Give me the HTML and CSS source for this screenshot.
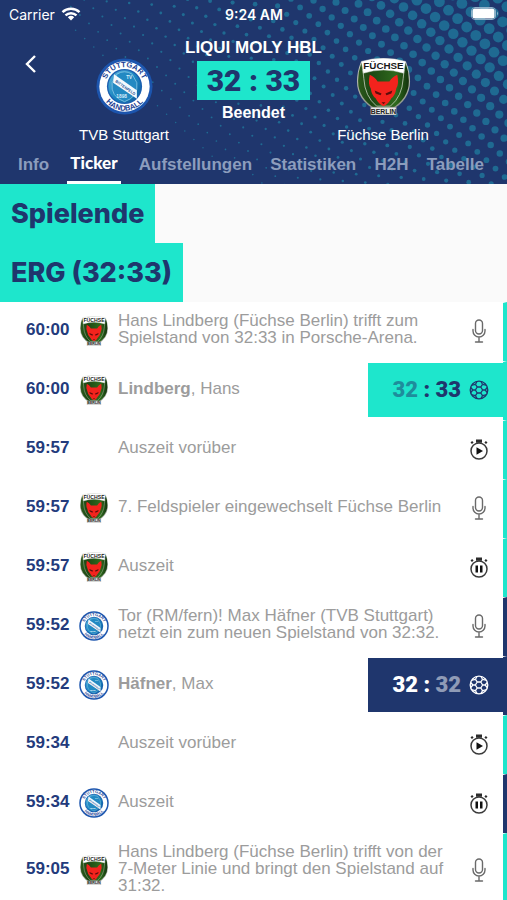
FILE: index.html
```html
<!DOCTYPE html>
<html lang="de">
<head>
<meta charset="utf-8">
<meta name="viewport" content="width=device-width, initial-scale=1">
<title>TVB Stuttgart – Füchse Berlin</title>
<link rel="stylesheet" href="styles.css">
</head>
<body>
<svg class="defs" aria-hidden="true">
  <defs>
    <linearGradient id="g-blue" x1="0" y1="0" x2="1" y2="1"><stop offset="0" stop-color="#59b4dc"/><stop offset=".5" stop-color="#1b86c0"/><stop offset="1" stop-color="#0d5c9c"/></linearGradient>
    <linearGradient id="g-green" x1="0" y1="0" x2="1" y2="0"><stop offset="0" stop-color="#2c5a1c"/><stop offset=".25" stop-color="#1d4713"/><stop offset=".75" stop-color="#2f6a1d"/><stop offset="1" stop-color="#12330c"/></linearGradient>
    <linearGradient id="g-silver" x1="0" y1="0" x2="0" y2="1"><stop offset="0" stop-color="#c9ccc6"/><stop offset="1" stop-color="#8d9488"/></linearGradient>
    <path id="arc-top" d="M9.500 30a20.500 20.500 0 0 1 41 0"/>
    <path id="arc-bottom" d="M4.500 30a25.500 25.500 0 0 0 51 0"/>
    <symbol id="tvb" viewBox="0 0 60 60">
      <circle cx="30" cy="30" r="29.500" fill="#1c55ae"/>
      <circle cx="30" cy="30" r="26.500" fill="#fff"/>
      <circle cx="30" cy="30" r="18.500" fill="#1c5fb0"/>
      <circle cx="30" cy="30" r="17" fill="url(#g-blue)"/>
      <path d="M22 17q8-5 16 0l5 9q2 15-13 20-15-5-13-20z" fill="#2389c2" stroke="#8fcbe8" stroke-width=".8"/>
      <path d="M19 17l24 17v9L18 26z" fill="#f4f9fd"/>
      <text class="crest-strip" x="31" y="32.500" transform="rotate(35 31 31)">BITTENFELD</text>
      <text class="crest-small" x="35" y="22">TV</text>
      <text class="crest-small" x="27" y="42">1898</text>
      <text class="crest-ring"><textPath href="#arc-top" startOffset="50%">STUTTGART</textPath></text>
      <text class="crest-ring"><textPath href="#arc-bottom" startOffset="50%">HANDBALL</textPath></text>
    </symbol>
    <symbol id="fuchs" viewBox="0 0 54 58">
      <path d="M4 4Q27-3 50 4q4 10 4 20 0 19-19 29H19Q0 43 0 24 0 14 4 4z" fill="url(#g-silver)"/>
      <path d="M4.500 5Q27-2 49.500 5 53 14 52.800 24q0 17-18 28h-15.600Q1.200 41 1.200 24 1 14 4.500 5z" fill="url(#g-green)"/>
      <path d="M6 12l1 9q1 18 13 28h14q12-10 13-28l1-9" fill="none" stroke="#c9d3c2" stroke-width=".8"/>
      <path d="M4.500 3.500Q27-3 49.500 3.500l-2 12Q27 9 6.500 15.500z" fill="#fff" stroke="#d5d8d2" stroke-width=".5"/>
      <path d="M13 17q5 2 8 7h12q3-5 8-7 2 9-1 14-1 7-5 10-3 6-8 8-5-2-8-8-4-3-5-10-3-5-1-14z" fill="#f3231d"/>
      <path d="M18 33l7 3-1 2-5-2zM36 33l-7 3 1 2 5-2zM25 45h4l-2 2z" fill="#5c0d0b"/>
      <path d="M14 50h26v8H14z" fill="#e9ebe8" stroke="#777" stroke-width=".6"/>
      <text class="crest-name" x="27" y="11.500">FÜCHSE</text>
      <text class="crest-city" x="27" y="56.600">BERLIN</text>
    </symbol>
    <symbol id="mic" viewBox="0 0 24 24">
      <g fill="none" stroke="#6a6a6a" stroke-width="1.400" stroke-linecap="round">
        <rect x="8.500" y="1" width="7" height="14" rx="3.500"/>
        <path d="M6 10.500v1.500a6 6 0 0 0 12 0v-1.500M12 18v5M8.500 23h7"/>
      </g>
    </symbol>
    <symbol id="watch" viewBox="0 0 24 24">
      <circle cx="12" cy="14" r="8" fill="none" stroke="#3a3a3a" stroke-width="1.500"/>
      <path d="M9 2.500h6v3.300H9zM3.500 5.500l1.600-1.600 1.500 1.500L5 7zM20.500 5.500l-1.600-1.600-1.500 1.500L19 7z" fill="#2b2b2b"/>
    </symbol>
    <symbol id="resume" viewBox="0 0 24 24"><use href="#watch"/><path d="M9.500 10.300l6.500 3.700-6.500 3.700z" fill="#111"/></symbol>
    <symbol id="pause" viewBox="0 0 24 24"><use href="#watch"/><path d="M8.500 10.500h2.500v7H8.500zM13 10.500h2.500v7H13z" fill="#111"/></symbol>
    <symbol id="ball" viewBox="0 0 20 20">
      <g fill="none" stroke="currentColor" stroke-width="1.300" stroke-linejoin="round">
        <circle cx="10" cy="10" r="8.800"/>
        <path d="M8.200 7h3.600l1.800 3-1.800 3H8.200L6.400 10zM8.200 7L6.500 4.300M11.800 7l1.700-2.700M13.600 10h2.600M11.800 13l1.700 2.700M8.200 13l-1.700 2.700M6.400 10H3.800M6.500 4.300L8 1.500M6.500 4.300L3 5.200M13.500 4.300L12 1.500M13.500 4.300l3.500.9M16.200 10l2-2.500M16.200 10l2 2.500M13.500 15.700l3.500-.9M13.500 15.700L12 18.500M6.500 15.700L8 18.500M6.500 15.700L3 14.800M3.800 10l-2-2.500M3.800 10l-2 2.500"/>
      </g>
    </symbol>
  </defs>
</svg>

<header class="header">
  <svg class="halftone" id="halftone" viewBox="0 0 507 184" preserveAspectRatio="xMaxYMin slice" aria-hidden="true"></svg>

  <div class="status">
    <span class="carrier">Carrier
      <svg width="20" height="14" viewBox="0 0 20 14" aria-hidden="true">
        <g fill="none" stroke="#fff" stroke-width="2.400"><path d="M1.500 5.200a12.300 12.300 0 0 1 17 0M4.500 8.400a8 8 0 0 1 11 0"/></g>
        <path d="M10 13.500l-3.200-3.300a4.700 4.700 0 0 1 6.400 0z" fill="#fff"/>
      </svg>
    </span>
    <time class="clock">9:24 AM</time>
    <svg class="battery" width="28" height="14" viewBox="0 0 28 14" aria-hidden="true">
      <rect x=".5" y=".5" width="24" height="12" rx="3.500" fill="none" stroke="#8eb0c8"/>
      <rect x="1.500" y="1.500" width="22" height="10" rx="2.500" fill="#fff"/>
      <path d="M26 4.500q2 2 0 4z" fill="#8eb0c8"/>
    </svg>
  </div>

  <div class="match">
    <button class="back" type="button" aria-label="Zurück">
      <svg width="12" height="20" viewBox="0 0 12 20"><path d="M10 2L2 10l8 8" fill="none" stroke="#fff" stroke-width="2.400"/></svg>
    </button>
    <div class="team">
      <svg class="team-logo" aria-hidden="true"><use href="#tvb"/></svg>
      <span>TVB Stuttgart</span>
    </div>
    <div class="result">
      <h1 class="league">LIQUI MOLY HBL</h1>
      <strong class="score">32 : 33</strong>
      <span class="state">Beendet</span>
    </div>
    <div class="team">
      <svg class="team-logo" aria-hidden="true"><use href="#fuchs"/></svg>
      <span>Füchse Berlin</span>
    </div>
  </div>

  <nav class="tabs">
    <a href="#info">Info</a>
    <a href="#ticker" class="active" aria-current="page">Ticker</a>
    <a href="#aufstellungen">Aufstellungen</a>
    <a href="#statistiken">Statistiken</a>
    <a href="#h2h">H2H</a>
    <a href="#tabelle">Tabelle</a>
  </nav>
</header>

<main>
  <section class="titles">
    <h2>Spielende</h2>
    <h2>ERG (32:33)</h2>
  </section>

  <ol class="ticker">
    <li class="event away">
      <time>60:00</time>
      <svg class="logo"><use href="#fuchs"/></svg>
      <p>Hans Lindberg (Füchse Berlin) trifft zum Spielstand von 32:33 in Porsche-Arena.</p>
      <svg class="icon"><use href="#mic"/></svg>
    </li>
    <li class="event away goal">
      <time>60:00</time>
      <svg class="logo"><use href="#fuchs"/></svg>
      <p><b>Lindberg</b>, Hans</p>
      <div class="goal-score"><span class="nums"><i>32</i> : 33</span><svg class="ball"><use href="#ball"/></svg></div>
    </li>
    <li class="event away">
      <time>59:57</time>
      <span></span>
      <p>Auszeit vorüber</p>
      <svg class="icon"><use href="#resume"/></svg>
    </li>
    <li class="event away">
      <time>59:57</time>
      <svg class="logo"><use href="#fuchs"/></svg>
      <p>7. Feldspieler eingewechselt Füchse Berlin</p>
      <svg class="icon"><use href="#mic"/></svg>
    </li>
    <li class="event away">
      <time>59:57</time>
      <svg class="logo"><use href="#fuchs"/></svg>
      <p>Auszeit</p>
      <svg class="icon"><use href="#pause"/></svg>
    </li>
    <li class="event home">
      <time>59:52</time>
      <svg class="logo"><use href="#tvb"/></svg>
      <p>Tor (RM/fern)! Max Häfner (TVB Stuttgart) netzt ein zum neuen Spielstand von 32:32.</p>
      <svg class="icon"><use href="#mic"/></svg>
    </li>
    <li class="event home goal">
      <time>59:52</time>
      <svg class="logo"><use href="#tvb"/></svg>
      <p><b>Häfner</b>, Max</p>
      <div class="goal-score"><span class="nums">32 : <i>32</i></span><svg class="ball"><use href="#ball"/></svg></div>
    </li>
    <li class="event away">
      <time>59:34</time>
      <span></span>
      <p>Auszeit vorüber</p>
      <svg class="icon"><use href="#resume"/></svg>
    </li>
    <li class="event home">
      <time>59:34</time>
      <svg class="logo"><use href="#tvb"/></svg>
      <p>Auszeit</p>
      <svg class="icon"><use href="#pause"/></svg>
    </li>
    <li class="event away">
      <time>59:05</time>
      <svg class="logo"><use href="#fuchs"/></svg>
      <p>Hans Lindberg (Füchse Berlin) trifft von der 7-Meter Linie und bringt den Spielstand auf 31:32.</p>
      <svg class="icon"><use href="#mic"/></svg>
    </li>
  </ol>
</main>
<script src="halftone.js"></script>
</body>
</html>
```
FILE: styles.css
```css
:root {
  --navy: #1f366d;
  --teal: #1ee6cc;
  --grey: #9c9c9c;
}

* { box-sizing: border-box; }

body {
  margin: 0;
  background: #fff;
  font-family: "Liberation Sans", Arial, sans-serif;
  font-size: 17px;
}

h1, h2, p, ol { margin: 0; padding: 0; }

.defs { position: absolute; width: 0; height: 0; }

.crest-ring, .crest-strip, .crest-small, .crest-name, .crest-city {
  font-family: "Liberation Sans", Arial, sans-serif;
  font-weight: 700;
  text-anchor: middle;
}
.crest-ring { font-size: 8px; fill: #1c3f94; }
.crest-strip { font-size: 4px; fill: #1c4f94; }
.crest-small { font-size: 5px; fill: #d8eefa; }
.crest-name { font-size: 10px; fill: #1a1a1a; }
.crest-city { font-size: 7px; fill: #222; }

/* Header */
.header {
  position: relative;
  background: var(--navy);
  color: #fff;
}
.halftone {
  position: absolute;
  inset: 0;
  width: 100%;
  height: 100%;
  fill: #1f6a92;
}
.status, .match, .tabs { position: relative; }

.status {
  display: grid;
  grid-template-columns: 1fr auto 1fr;
  align-items: center;
  height: 28px;
  padding: 0 8px 0 9px;
  font-family: Inter, "Liberation Sans", sans-serif;
  font-size: 14px;
}
.carrier { display: flex; align-items: center; gap: 6px; }
.clock { font-weight: 600; }
.battery { justify-self: end; }

.match {
  display: grid;
  grid-template-columns: 69px 110px 1fr 110px 69px;
  padding-top: 10px;
}
.back {
  align-self: start;
  justify-self: start;
  margin: 16px 0 0 25px;
  padding: 0;
  border: 0;
  background: none;
}
.back svg { display: block; }
.team {
  display: flex;
  flex-direction: column;
  align-items: center;
  gap: 10px;
  padding-top: 20px;
  font-size: 15px;
  line-height: 20px;
  white-space: nowrap;
}
.team-logo { width: 57px; height: 57px; }
.result {
  display: flex;
  flex-direction: column;
  align-items: center;
  white-space: nowrap;
}
.league { font-size: 17px; line-height: 20px; }
.score {
  margin: 3px 0;
  padding: 0 10px;
  background: var(--teal);
  color: var(--navy);
  font: 900 30px/39px Roboto, sans-serif;
}
.state { font-size: 16px; font-weight: 700; line-height: 20px; }

.tabs {
  display: flex;
  justify-content: space-between;
  padding: 0 23px 0 18px;
}
.tabs a {
  color: #8c9dbd;
  font-weight: 700;
  line-height: 39px;
  text-decoration: none;
}
.tabs .active {
  padding: 0 3px;
  border-bottom: 3px solid #fff;
  color: #fff;
  font-family: Lato, sans-serif;
  font-weight: 900;
  line-height: 36px;
}

/* Section titles */
.titles {
  display: flex;
  flex-direction: column;
  align-items: flex-start;
  background: #fafafa;
}
.titles h2 {
  padding: 0 11px;
  background: var(--teal);
  color: var(--navy);
  font: 800 27px/59px Inter, sans-serif;
}

/* Ticker */
.ticker { list-style: none; }
.event {
  --side: var(--teal);
  display: grid;
  grid-template-columns: 53px 39px minmax(0, 1fr) 50px;
  align-items: center;
  min-height: 59px;
  padding-left: 26px;
  border-right: 4px solid var(--side);
  border-top: 1px solid #fff;
}
.home { --side: var(--navy); }
.event time { padding-bottom: 5px; color: #233b7c; font-weight: 700; }
.logo { width: 30px; height: 30px; margin-bottom: 3px; }
.event p {
  padding: 9px 0 15px;
  color: var(--grey);
  line-height: 17px;
}
.icon { width: 24px; height: 24px; margin: 0 0 3px 14px; }

.goal { grid-template-columns: 53px 39px minmax(0, 1fr) 135px; }
.goal-score {
  display: flex;
  align-items: center;
  justify-content: flex-end;
  gap: 8px;
  height: 54px;
  margin-bottom: 2px;
  padding-right: 14px;
  background: var(--side);
  color: var(--navy);
}
.home .goal-score { color: #fff; }
.nums { font: 900 22px/54px Roboto, sans-serif; }
.nums i { font-style: normal; opacity: .5; }
.ball { width: 20px; height: 20px; }
```
FILE: halftone.js
```js
// Fills the header with a halftone grid whose dots grow towards the top right.
const svg = document.getElementById("halftone");
for (let i = -60; i <= 60; i++) {
  for (let j = -60; j <= 60; j++) {
    const x = 449 + i * 9.1 + j * 13.4;
    const y = 49 + i * 8.4 - j * 6.8;
    if (x < 70 || x > 515 || y < -8 || y > 192) continue;
    const r = Math.min(5.4, 5.2 * Math.exp((x - 453) * 0.005 - (y - 35) * 0.006));
    if (r < 0.75) continue;
    const dot = document.createElementNS("http://www.w3.org/2000/svg", "circle");
    dot.setAttribute("cx", x);
    dot.setAttribute("cy", y);
    dot.setAttribute("r", r);
    svg.appendChild(dot);
  }
}
```
